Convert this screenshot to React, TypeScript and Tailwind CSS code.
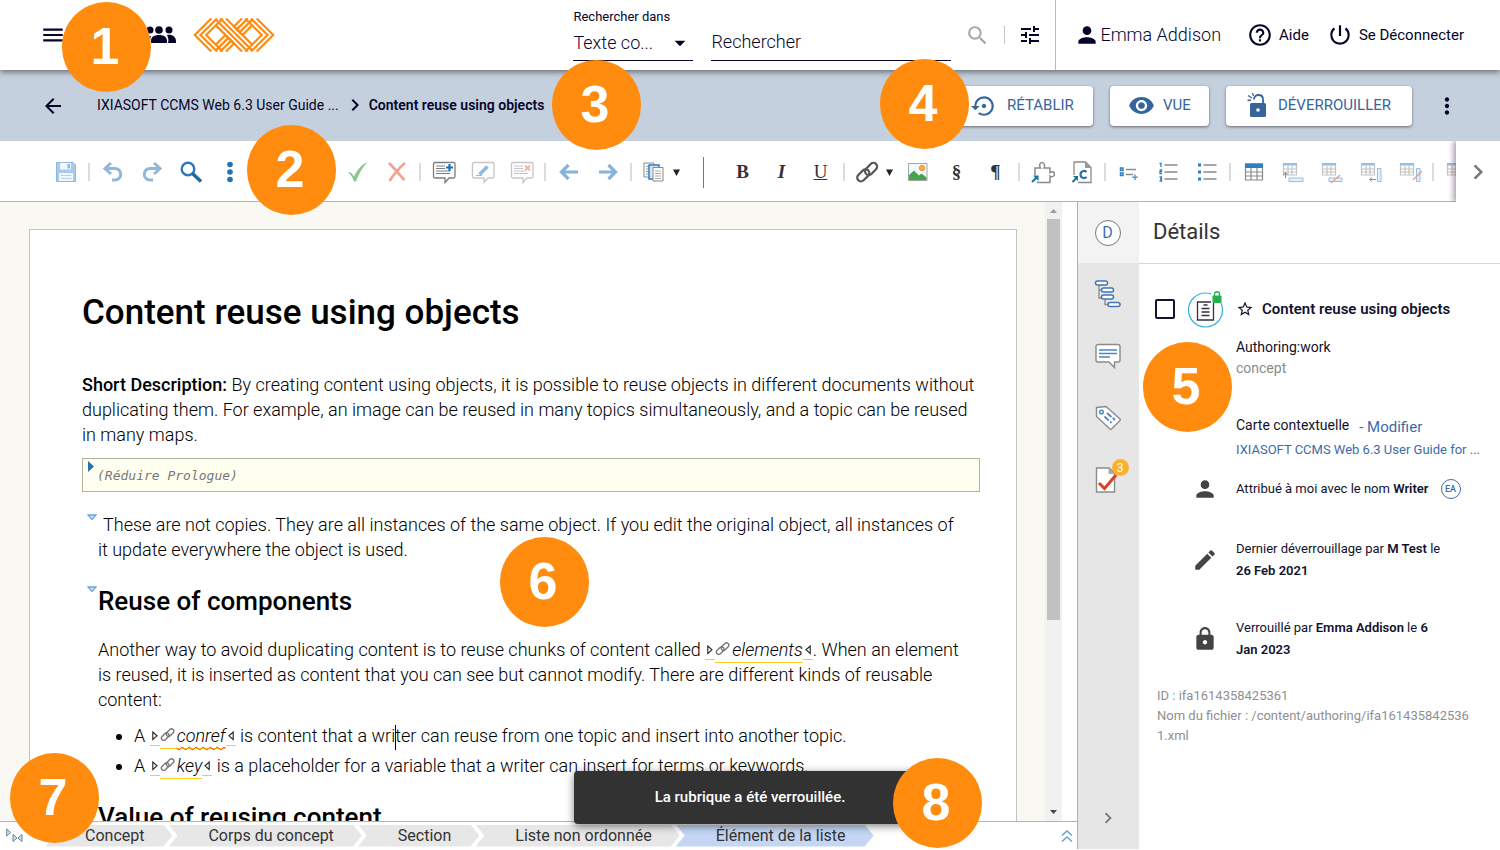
import type { ReactNode } from "react";
import {
  MdArrowBack,
  MdArrowDropDown,
  MdChevronRight,
  MdEdit,
  MdHelpOutline,
  MdLock,
  MdMenu,
  MdMoreVert,
  MdPerson,
  MdPowerSettingsNew,
  MdSearch,
  MdSettingsBackupRestore,
  MdStarBorder,
  MdTune,
  MdVisibility,
} from "react-icons/md";
import clsx from "clsx";

interface ClassNameProps {
  className?: string;
}

interface ChildrenProps extends ClassNameProps {
  children?: ReactNode;
}

/* ---------- Icons ---------- */

const Logo = () => (
  <svg width="82" height="34" viewBox="-1 0 82 33" fill="none" stroke="#ff8c0f" strokeWidth="2.2">
    {["", "rotate(180 40 16.5)"].map((transform) => (
      <g key={transform} transform={transform}>
        <path d="M17.3 0 .8 16.5l16.5 16.5M23 0 6.5 16.5 23 33M28.7 0 12.2 16.5 28.7 33" />
        <path d="M21.85 6.85 40 25M21.85 1.15 40 19.3M26.3 0 40 13.7M32 0l16.5 16.5" />
        <path d="M40 8l8-8M42.85 10.85 53.7 0M45.65 13.65l12.5-12.5M48.5 16.5l9.65-9.65" />
      </g>
    ))}
  </svg>
);

const GroupIcon = () => (
  <svg width="32" height="20" viewBox="0 0 32 20" fill="#05052a">
    <circle cx="6" cy="5" r="3.5" />
    <circle cx="15" cy="5" r="3.8" />
    <circle cx="25" cy="5" r="3.5" />
    <path d="M0 18c0-5 2-7 6-7h1c-1 2-1 4-1 7zM7 18v-2c0-4 3-6 8-6s8 2 8 6v2zM24 18c1-3 0-6-1-8 5-1 9 2 9 6v2z" />
  </svg>
);

const Icon = ({ children, className }: ChildrenProps) => (
  <svg width="24" height="24" viewBox="0 0 24 24" fill="none" className={className}>
    {children}
  </svg>
);

const SaveIcon = () => (
  <Icon>
    <path d="M2.5 2.5H19l2.5 2.5v16.5h-19z" fill="#a9cbe9" stroke="#8fb6dc" />
    <path d="M6 3h11v6.5H6z" fill="#f2f7fb" />
    <path d="M13.5 4H16v4.5h-2.500z" fill="#8fb6dc" />
    <path d="M5 13h14v8H5z" fill="#f2f7fb" />
    <path d="M7 15.5h10.500M7 18.5h10.500" stroke="#b9d1e6" />
  </Icon>
);

const UndoIcon = ({ className }: ClassNameProps) => (
  <Icon className={className}>
    <path d="M10 3 4 8.5l6 5.5M4.5 8.5H14A5.500 5.500 0 0 1 14 20h-3" stroke="#8fb8dd" strokeWidth="3" />
  </Icon>
);

const FindIcon = () => (
  <Icon>
    <circle cx="9" cy="9" r="6.3" stroke="#2b7ac0" strokeWidth="2.4" />
    <path d="m13.5 13.5 8.5 8" stroke="#1a6a9f" strokeWidth="3.6" />
  </Icon>
);

const BlueDotsIcon = () => (
  <Icon>
    <g fill="#2273b4">
      <circle cx="12" cy="4.5" r="2.8" />
      <circle cx="12" cy="12" r="2.8" />
      <circle cx="12" cy="19.5" r="2.8" />
    </g>
  </Icon>
);

const AcceptIcon = () => (
  <Icon>
    <path d="M2 12.5c2-1 4 0 6 4C11 10 15 5 21.500 2 16 8 12.5 14 10 21.500H8C6.5 17 4.5 14 2 12.500z" fill="#8cc48f" />
  </Icon>
);

const RejectIcon = () => (
  <Icon>
    <path d="M4 3c5 5 10 11 15.5 17M20 3C14 8 9 14 4.5 21" stroke="#f0a192" strokeWidth="2.6" />
  </Icon>
);

const CommentIcon = ({ children, className }: ChildrenProps) => (
  <Icon className={className}>
    <path
      d="M3 2.500h18.500A1.500 1.500 0 0 1 23 4v12.500a1.500 1.500 0 0 1-1.500 1.500H17l-4 4.500V18H3a1.500 1.500 0 0 1-1.500-1.500V4A1.500 1.500 0 0 1 3 2.500z"
      fill="#fff"
      stroke="currentColor"
      strokeWidth="1.3"
    />
    {children}
  </Icon>
);

const CommentLines = () => <path d="M4 6h9M4 8.5h9M4 11h14M4 13.5h14" stroke="currentColor" strokeWidth="1" />;

const ArrowIcon = ({ className }: ClassNameProps) => (
  <Icon className={className}>
    <path d="M4 12h17M11.5 5l-7 7 7 7" stroke="#84b3db" strokeWidth="3.2" />
  </Icon>
);

const CopiesIcon = () => (
  <Icon>
    <path d="M2 3h10v14H2z" fill="#fff" stroke="#8a8a8a" />
    <path d="M4 6.5h3M4 9h3M4 11.5h3M4 14h3" stroke="#999" />
    <path d="M7 5h10v14H7z" fill="#d5e7f7" stroke="#2f7fc4" strokeWidth="1.5" />
    <path d="M11 7.5h10V21H11z" fill="#fff" stroke="#8a8a8a" />
    <path d="M13 11h6M13 13.5h6M13 16h6M13 18.5h6" stroke="#aaa" />
  </Icon>
);

const LinkIcon = ({ size = 24, color = "#555" }: { size?: number; color?: string }) => (
  <svg width={size} height={size} viewBox="0 0 24 24" fill="none" className="inline-block align-baseline">
    <g transform="rotate(-45 12 12)" stroke={color} strokeWidth="2.2">
      <rect x="0" y="8" width="14" height="7.500" rx="3.7" />
      <rect x="10" y="9" width="14" height="7.500" rx="3.7" />
    </g>
  </svg>
);

const ImageIcon = () => (
  <Icon>
    <path d="M2.5 3.500h18.500v17H2.500z" fill="#f3f8fd" stroke="#a5a5a5" />
    <circle cx="16" cy="8" r="2.6" fill="#fbb03b" stroke="#f08a2c" />
    <path d="M3 20v-5l5-4.500 5 5 2.500-2 5 4V20z" fill="#4aa251" />
  </Icon>
);

const PuzzleIcon = () => (
  <Icon>
    <path
      d="M4 15V8h5.500c-1.500-2-1-5.500 1.500-5.500S14 6 13 8h6v4.500c2-1.500 4.500-.8 4.500 1.500S21 17.500 19 16v6.500H6"
      stroke="#8b8b8b"
      strokeWidth="1.5"
    />
    <path d="m1 22 5-5" stroke="#17719f" strokeWidth="2" />
    <path d="M2 15.500h5.500V21z" fill="#17719f" />
  </Icon>
);

const ReusableIcon = () => (
  <Icon>
    <path d="M4 15V2h11.500l5.500 5.500v15H8" stroke="#8b8b8b" strokeWidth="1.3" />
    <path d="M15 2v6h6z" fill="#9a9a9a" />
    <path d="M16.500 12c-2-2-6-1-6 2.500s4 4.500 6 2.500" stroke="#2273b4" strokeWidth="2.2" />
    <path d="m2.500 22 5-5" stroke="#17719f" strokeWidth="2" />
    <path d="M3 16h5v5z" fill="#17719f" />
  </Icon>
);

const InsertItemIcon = () => (
  <Icon>
    <path d="M3.500 8H6v2.500H3.500zM3.500 13H6v2.500H3.500z" stroke="#2b7fc2" strokeWidth="1.5" />
    <path d="M9 9.500h10M9 14.500h7" stroke="#8b8b8b" strokeWidth="1.3" />
    <path d="M18 14.500V20M15.300 17.300h5.500" stroke="#5a9bd0" strokeWidth="1.5" />
  </Icon>
);

const ListIcon = ({ ordered }: { ordered?: boolean }) => (
  <Icon>
    <path d="M8.500 5h13M8.500 12h13M8.500 19h13" stroke="#8b8b8b" strokeWidth="1.3" />
    {ordered ? (
      <path
        d="M3.500 3.500H5V7M3.500 10h2v1.700H4v2h2M3.500 17h2v4h-2M4 19h1.500"
        stroke="#2b7fc2"
        strokeWidth="1.3"
      />
    ) : (
      <path d="M3 3.500h3v3H3zM3 10.500h3v3H3zM3 17.500h3v3H3z" fill="#2b7fc2" />
    )}
  </Icon>
);

const TableIcon = () => (
  <Icon>
    <path d="M3.500 4h17v16h-17zM3.500 12h17M3.500 16h17M9 8v12M15 8v12" stroke="#8b8b8b" strokeWidth="1.2" />
    <path d="M3 3.500h18V8H3z" fill="#2b7fc2" />
  </Icon>
);

const TableEditIcon = ({ children }: ChildrenProps) => (
  <Icon>
    <path d="M2.500 4h13v11h-13zM2.500 9h13M2.500 12h13M7 6v9M11 6v9" stroke="#c3c3c3" strokeWidth="1.2" />
    <path d="M2 3h14v2.500H2z" fill="#90c0e6" />
    {children}
  </Icon>
);

const UnlockBurstIcon = () => (
  <svg width="22" height="26" viewBox="0 0 22 26" fill="none">
    <rect x="4" y="10" width="16" height="14" rx="1.5" fill="#36659d" />
    <path d="M8 6.500C8 3.500 10 2 12.500 2S17 3.500 17 6.500V11" stroke="#36659d" strokeWidth="1.8" />
    <circle cx="12" cy="17" r="1.8" fill="#fff" />
    <path d="M2 2.500 6 5M6.500 0l1 3M1.500 7.500l3.500-.5" stroke="#36659d" strokeWidth="1.3" />
  </svg>
);

const OutlineIcon = () => (
  <svg width="28" height="28" viewBox="0 0 28 28" fill="none">
    <path d="M5 5v13h5M5 10h3M11 19v5.500h4" stroke="#8b8b8b" strokeWidth="1.3" />
    <g fill="#fff" stroke="#4077b3" strokeWidth="1.5">
      <rect x="1.500" y="1" width="12" height="4" rx="2" />
      <rect x="7.500" y="8" width="12" height="4" rx="2" />
      <rect x="7.500" y="15" width="12" height="4" rx="2" />
      <rect x="14" y="22.500" width="12" height="4" rx="2" />
    </g>
  </svg>
);

const CommentsTabIcon = () => (
  <svg width="28" height="28" viewBox="0 0 28 28" fill="none">
    <path
      d="M4 2.500h20a2 2 0 0 1 2 2V18a2 2 0 0 1-2 2h-3.500v5.500L15 20H4a2 2 0 0 1-2-2V4.500a2 2 0 0 1 2-2z"
      fill="#fff"
      stroke="#8b8b8b"
      strokeWidth="1.4"
    />
    <path d="M5 8h18M5 11.500h18M5 15h11" stroke="#4b87c4" strokeWidth="1.5" />
  </svg>
);

const TagIcon = () => (
  <svg width="28" height="28" viewBox="0 0 28 28" fill="none">
    <path
      d="M2.500 3.500 12 2.500 26 15c.5.500.5 1 0 1.500L17.500 25c-.5.500-1 .5-1.500 0L2.500 12.500z"
      fill="#fff"
      stroke="#8b8b8b"
      strokeWidth="1.4"
    />
    <circle cx="7.500" cy="8" r="1.800" stroke="#4b87c4" strokeWidth="1.500" />
    <path d="m13 9 8 7M10.500 12.500l7 6.500" stroke="#4b87c4" strokeWidth="1.800" strokeDasharray="6 1.500" />
  </svg>
);

const ReviewIcon = () => (
  <svg width="28" height="28" viewBox="0 0 28 28" fill="none">
    <path d="M2.500 2H15l5.500 5v19h-18z" fill="#fff" stroke="#8b8b8b" strokeWidth="1.4" />
    <path d="M14.500 2v6h6z" fill="#aaa" />
    <path d="m5 17 5.500 5.500L22 9" stroke="#d8432a" strokeWidth="3" />
  </svg>
);

const DocumentLockIcon = () => (
  <svg width="36" height="38" viewBox="0 0 36 38" fill="none">
    <circle cx="17.500" cy="20" r="17" stroke="#33b1e2" strokeWidth="1.2" />
    <path d="M9.500 12h16v18h-16z" stroke="#33333f" strokeWidth="1.3" />
    <path d="M15.500 15h4M13.500 18.500h8M13.500 22h8M13.500 25.500h8" stroke="#33333f" strokeWidth="1.3" />
    <path d="M23 1h12v12H23z" fill="#fff" />
    <rect x="24.500" y="5.500" width="9" height="7.500" rx="1" fill="#22b14c" />
    <path d="M26.500 6V4c0-3 5-3 5 0v2" stroke="#22b14c" strokeWidth="1.3" />
  </svg>
);

/* ---------- Header ---------- */

const Header = () => (
  <header className="relative z-10 flex h-[70px] shrink-0 items-center bg-white pl-10 text-[#05052a] shadow-[0_2px_6px_rgba(0,0,0,0.5)]">
    <button type="button" aria-label="Menu">
      <MdMenu size={26} />
    </button>
    <button type="button" aria-label="Groupes" className="ml-[78px]">
      <GroupIcon />
    </button>
    <a href="#accueil" aria-label="Accueil" className="ml-[17px]">
      <Logo />
    </a>
    <form className="ml-auto flex h-full items-center">
      <div className="mr-[18px] flex h-[52px] w-[120px] flex-col border-b border-[#05052a]">
        <label htmlFor="scope" className="text-[13px] leading-4">
          Rechercher dans
        </label>
        <div className="relative flex grow items-center">
          <select id="scope" className="w-full appearance-none text-[18px] leading-6 font-light">
            <option>Texte co...</option>
          </select>
          <MdArrowDropDown size={26} className="pointer-events-none absolute right-0" />
        </div>
      </div>
      <div className="mr-[14px] flex h-[52px] w-60 items-end border-b border-[#05052a] pb-[6px]">
        <input
          type="text"
          aria-label="Rechercher"
          placeholder="Rechercher"
          className="w-full text-[18px] leading-6 font-light outline-none placeholder:text-[#05052a]"
        />
      </div>
      <button type="submit" aria-label="Lancer la recherche">
        <MdSearch size={25} className="text-[#a8a8a8]" />
      </button>
      <div className="ml-[14px] h-[18px] w-px bg-[#c4c4c4]" />
      <button type="button" aria-label="Filtres" className="mr-[13px] ml-[13px]">
        <MdTune size={24} />
      </button>
    </form>
    <div className="flex h-full items-center border-l border-[#b8b8b8] pr-9 pl-[18px] text-[15px]">
      <MdPerson size={26} />
      <span className="mr-[26px] text-[18px] leading-6 font-light">Emma Addison</span>
      <a href="#aide" className="mr-[18px] flex items-center gap-[6px]">
        <MdHelpOutline size={26} />
        Aide
      </a>
      <a href="#deconnexion" className="flex items-center gap-[6px]">
        <MdPowerSettingsNew size={26} />
        Se Déconnecter
      </a>
    </div>
  </header>
);

const ActionButton = ({ children, className }: ChildrenProps) => (
  <button
    type="button"
    className={clsx(
      "flex h-10 items-center rounded bg-white text-[15px] text-[#36659d] shadow-[0_1px_3px_rgba(0,0,0,0.5)]",
      className
    )}
  >
    {children}
  </button>
);

const TopicBar = () => (
  <div className="flex h-[71px] shrink-0 items-center bg-[#c5d0df] pl-[41px]">
    <button type="button" aria-label="Retour">
      <MdArrowBack size={24} />
    </button>
    <nav className="ml-8 flex items-center pb-px text-[14px]">
      <a href="#guide">IXIASOFT CCMS Web 6.3 User Guide ...</a>
      <MdChevronRight size={24} className="mr-[2px] ml-1" />
      <span className="font-semibold">Content reuse using objects</span>
    </nav>
    <div className="ml-auto flex gap-[17px]">
      <ActionButton className="w-[154px] gap-[10px] pl-8">
        <MdSettingsBackupRestore size={26} />
        RÉTABLIR
      </ActionButton>
      <ActionButton className="w-[99px] gap-2 pl-[18px]">
        <MdVisibility size={27} />
        VUE
      </ActionButton>
      <ActionButton className="w-[186px] gap-[10px] pl-[20px]">
        <UnlockBurstIcon />
        DÉVERROUILLER
      </ActionButton>
    </div>
    <button type="button" aria-label="Plus d'actions" className="mr-10 ml-[22px]">
      <MdMoreVert size={26} />
    </button>
  </div>
);

/* ---------- Editor toolbar ---------- */

const Tool = ({ label, children }: { label: string; children: ReactNode }) => (
  <button type="button" aria-label={label} className="flex h-10 w-[39px] shrink-0 items-center justify-center">
    {children}
  </button>
);

const MenuTool = ({ label, children }: { label: string; children: ReactNode }) => (
  <button type="button" aria-label={label} className="flex h-10 w-[50px] shrink-0 items-center gap-[6px] pl-[7px]">
    {children}
    <svg width="9" height="9" viewBox="0 0 9 9" fill="#222" className="shrink-0">
      <path d="M1 1.500h7L4.500 8z" />
    </svg>
  </button>
);

const Divider = () => <div className="mx-[3px] h-[18px] w-[2px] shrink-0 bg-[#dcdcdc]" />;

const letterClass = "font-['Liberation_Serif',serif] text-[19px] leading-6 text-[#333]";

const Toolbar = () => (
  <div className="flex h-[61px] shrink-0 bg-white">
    <div className="flex min-w-0 grow items-center overflow-hidden border-b border-[#b4b4b4] pt-[2px] pl-[46px]">
      <Tool label="Enregistrer"><SaveIcon /></Tool>
      <Divider />
      <Tool label="Annuler"><UndoIcon /></Tool>
      <Tool label="Rétablir"><UndoIcon className="-scale-x-100" /></Tool>
      <Tool label="Chercher"><FindIcon /></Tool>
      <Tool label="Plus"><BlueDotsIcon /></Tool>
      <div className="w-[89px] shrink-0" />
      <Tool label="Accepter"><AcceptIcon /></Tool>
      <Tool label="Refuser"><RejectIcon /></Tool>
      <Divider />
      <Tool label="Ajouter un commentaire">
        <CommentIcon className="text-[#7d7d7d]">
          <CommentLines />
          <path d="M13.500 3.500h8v6h-8z" fill="#fff" />
          <path d="M17.500 4v7M14 7.500h7" stroke="#1b6fb5" strokeWidth="2.2" />
        </CommentIcon>
      </Tool>
      <Tool label="Modifier le commentaire">
        <CommentIcon className="text-[#c6c6c6]">
          <path d="m8.500 14.500 8-8" stroke="#8dbbe2" strokeWidth="3.5" />
          <path d="M5 15.500h6" stroke="#8dbbe2" />
        </CommentIcon>
      </Tool>
      <Tool label="Supprimer le commentaire">
        <CommentIcon className="text-[#c6c6c6]">
          <CommentLines />
          <path d="M14 4.500h7v7h-7z" fill="#fff" />
          <path d="m15 5.500 5 5M20 5.500l-5 5" stroke="#f0a192" strokeWidth="1.6" />
        </CommentIcon>
      </Tool>
      <Divider />
      <Tool label="Précédent"><ArrowIcon /></Tool>
      <Tool label="Suivant"><ArrowIcon className="-scale-x-100" /></Tool>
      <Divider />
      <MenuTool label="Copier"><CopiesIcon /></MenuTool>
      <div className="mr-[19px] ml-[18px] h-[31px] w-px shrink-0 bg-[#777]" />
      <Tool label="Gras"><span className={clsx(letterClass, "font-bold")}>B</span></Tool>
      <Tool label="Italique"><span className={clsx(letterClass, "font-bold italic")}>I</span></Tool>
      <Tool label="Souligné"><span className={clsx(letterClass, "underline")}>U</span></Tool>
      <Divider />
      <MenuTool label="Lien"><LinkIcon /></MenuTool>
      <Tool label="Image"><ImageIcon /></Tool>
      <Tool label="Section"><span className={clsx(letterClass, "font-bold")}>§</span></Tool>
      <Tool label="Paragraphe"><span className={clsx(letterClass, "font-bold")}>¶</span></Tool>
      <Divider />
      <Tool label="Composant"><PuzzleIcon /></Tool>
      <Tool label="Contenu réutilisable"><ReusableIcon /></Tool>
      <Divider />
      <Tool label="Insérer un élément"><InsertItemIcon /></Tool>
      <Tool label="Liste ordonnée"><ListIcon ordered /></Tool>
      <Tool label="Liste non ordonnée"><ListIcon /></Tool>
      <Divider />
      <Tool label="Tableau"><TableIcon /></Tool>
      <Tool label="Insérer une ligne">
        <TableEditIcon>
          <path d="M8 18h14v3.500H8z" fill="#e4f0fa" stroke="#90c0e6" />
          <path d="M4.500 18v-5M2.500 15l2-2.500 2 2.500" stroke="#8b8b8b" />
        </TableEditIcon>
      </Tool>
      <Tool label="Supprimer une ligne">
        <TableEditIcon>
          <path d="M9 18h13v3.500H9z" fill="#e4f0fa" stroke="#90c0e6" />
          <path d="m11 23 9-8" stroke="#f0a192" strokeWidth="1.6" />
        </TableEditIcon>
      </Tool>
      <Tool label="Insérer une colonne">
        <TableEditIcon>
          <path d="M18.500 8.500H22v13h-3.500z" fill="#e4f0fa" stroke="#90c0e6" />
          <path d="M17 19.500h-6M13 17.500l-2.500 2 2.500 2" stroke="#8b8b8b" />
        </TableEditIcon>
      </Tool>
      <Tool label="Supprimer une colonne">
        <TableEditIcon>
          <path d="M18.500 8.500H22v13h-3.500z" fill="#e4f0fa" stroke="#90c0e6" />
          <path d="m15 20 9-9" stroke="#f0a192" strokeWidth="1.6" />
        </TableEditIcon>
      </Tool>
      <Divider />
      <Tool label="Cellules"><TableEditIcon /></Tool>
    </div>
    <button
      type="button"
      aria-label="Suite de la barre d'outils"
      className="z-1 flex w-11 shrink-0 items-center justify-center bg-white text-[#777] shadow-[-3px_0_5px_rgba(90,60,90,0.45)] [clip-path:inset(0_0_0_-8px)]"
    >
      <MdChevronRight size={30} />
    </button>
  </div>
);

/* ---------- Document ---------- */

const FoldMarker = () => (
  <svg width="10" height="7" viewBox="0 0 10 7" className="absolute top-[2px] -left-[11px]">
    <path d="M1 1h8L5 5.500z" fill="#cfe4f7" stroke="#6aa5dc" strokeWidth="1.3" />
  </svg>
);

const TagEdge = ({ flip }: { flip?: boolean }) => (
  <span className="inline-block h-[18px] border-b border-[#f8ce1c] px-[2px] align-middle">
    <svg width="6" height="10" viewBox="0 0 6 10" className={clsx("mt-[3px]", flip && "-scale-x-100")}>
      <path d="M.8 1v7.500L5 4.800z" fill="#fff" stroke="#222" strokeWidth="1.1" />
    </svg>
  </span>
);

const KeyPhrase = ({ children, misspelled }: ChildrenProps & { misspelled?: boolean }) => (
  <span className="whitespace-nowrap">
    <TagEdge />
    <span className="border-b border-[#f8ce1c] pb-[2px] italic">
      <LinkIcon size={15} color="#777" />
      <span
        className={clsx(
          "ml-[2px]",
          misspelled && "underline decoration-red-500 decoration-wavy decoration-1 underline-offset-4"
        )}
      >
        {children}
      </span>
    </span>
    <TagEdge flip />
  </span>
);

const Article = () => (
  <article className="mt-[27px] mr-7 ml-[29px] grow border border-b-0 border-[#c3c3c0] bg-white pr-9 pl-[52px] text-[18px] leading-[25px] font-light text-black">
    <h1 className="mt-[61px] text-[35px] leading-[44px] font-medium">Content reuse using objects</h1>
    <p className="mt-[37px]">
      <strong className="font-medium">Short Description:</strong> By creating content using objects, it is possible to
      reuse objects in different documents without
      <br />
      duplicating them. For example, an image can be reused in many topics simultaneously, and a topic can be reused
      <br />
      in many maps.
    </p>
    <div className="mt-[11px] flex h-[34px] items-start border border-[#b3b39b] bg-[#ffffef]">
      <svg width="6" height="11" viewBox="0 0 6 11" fill="#2472b5" className="mt-[2px] ml-[5px]">
        <path d="M0 0v11l6-5.500z" />
      </svg>
      <span className="mt-1 ml-[3px] font-['DejaVu_Sans_Mono',monospace] text-[13px] font-normal text-[#777] italic">
        (Réduire Prologue)
      </span>
    </div>
    <div className="ml-4">
      <p className="relative mt-5">
        <FoldMarker />
        <span className="pl-[5px]">
          These are not copies. They are all instances of the same object. If you edit the original object, all instances of
        </span>
        <br />
        it update everywhere the object is used.
      </p>
      <div className="relative mt-[22px]">
        <FoldMarker />
        <h2 className="text-[26px] leading-[34px] font-medium">Reuse of components</h2>
      </div>
      <p className="mt-[19px]">
        Another way to avoid duplicating content is to reuse chunks of content called <KeyPhrase>elements</KeyPhrase>. When
        an element
        <br />
        is reused, it is inserted as content that you can see but cannot modify. There are different kinds of reusable
        <br />
        content:
      </p>
      <ul className="mt-[11px] list-disc space-y-[3px] pl-[36px]">
        <li>
          A <KeyPhrase misspelled>conref</KeyPhrase> is content that a wri
          <span className="-mr-px inline-block h-[25px] w-px bg-black align-middle" />
          ter can reuse from one topic and insert into another topic.
        </li>
        <li>
          A <KeyPhrase>key</KeyPhrase> is a placeholder for a variable that a writer can insert for terms or keywords.
        </li>
      </ul>
      <h2 className="mt-[22px] text-[26px] leading-[34px] font-medium">Value of reusing content</h2>
    </div>
  </article>
);

const Scrollbar = () => (
  <div className="flex w-[17px] shrink-0 flex-col items-center bg-[#f1f1f1]" aria-hidden="true">
    <svg width="9" height="17" viewBox="0 0 9 17" fill="#999">
      <path d="M1 11h7L4.500 7z" />
    </svg>
    <div className="h-[401px] w-[13px] bg-[#c1c1c1]" />
    <svg width="9" height="17" viewBox="0 0 9 17" fill="#444" className="mt-auto">
      <path d="M1 6h7L4.500 10z" />
    </svg>
  </div>
);

const crumbs = ["Concept", "Corps du concept", "Section", "Liste non ordonnée", "Élément de la liste"];

const ElementPath = () => (
  <nav className="flex h-[28px] shrink-0 items-center border-t border-[#b4b4b4] pl-[6px] text-[#333]">
    <svg width="18" height="16" viewBox="0 0 18 16" fill="#cfe0ee" stroke="#65839c">
      <path d="M.7 1v7l4-3.500zM7 6.500v7l4-3.500zM16 6.500v7L12 10z" />
    </svg>
    <div className="ml-[25px] flex h-[22px] text-[16px] leading-[22px]">
      {crumbs.map((crumb, i) => (
        <a
          key={crumb}
          href="#element"
          className={clsx(
            "-ml-1 pr-7 pl-10 [clip-path:polygon(0_0,calc(100%_-_9px)_0,100%_50%,calc(100%_-_9px)_100%,0_100%,9px_50%)]",
            i === crumbs.length - 1 ? "bg-[#c4d6f3]" : "bg-[#e7e7e7]"
          )}
        >
          {crumb}
        </a>
      ))}
    </div>
    <button type="button" aria-label="Déplier" className="mr-1 ml-auto">
      <svg width="12" height="14" viewBox="0 0 12 14" fill="none" stroke="#6aa0d0" strokeWidth="1.5">
        <path d="m1 6.500 5-4.500 5 4.500M1 12.500 6 8l5 4.500" />
      </svg>
    </button>
  </nav>
);

/* ---------- Side panel ---------- */

const RailTab = ({ label, children, active }: { label: string; children: ReactNode; active?: boolean }) => (
  <button
    type="button"
    aria-label={label}
    className={clsx("flex items-center justify-center pr-[2px]", active ? "h-[61px] bg-[#f3f3f3]" : "h-[62px]")}
  >
    {children}
  </button>
);

const Rail = () => (
  <div className="flex w-[62px] shrink-0 flex-col border-l border-[#b0b0b0] bg-[#e6e6e6]">
    <RailTab label="Détails" active>
      <span className="flex size-[26px] items-center justify-center rounded-full border border-[#777] bg-white text-[16px] text-[#3a72b0]">
        D
      </span>
    </RailTab>
    <RailTab label="Structure"><OutlineIcon /></RailTab>
    <RailTab label="Commentaires"><CommentsTabIcon /></RailTab>
    <RailTab label="Étiquettes"><TagIcon /></RailTab>
    <RailTab label="Révisions">
      <span className="relative">
        <ReviewIcon />
        <span className="absolute -top-[7px] -right-[7px] flex size-[17px] items-center justify-center rounded-full bg-[#fdb02f] text-[12px] text-white">
          3
        </span>
      </span>
    </RailTab>
    <button
      type="button"
      aria-label="Réduire le panneau"
      className="mt-auto flex h-[62px] items-center justify-center pr-[2px] text-[#777]"
    >
      <MdChevronRight size={22} />
    </button>
  </div>
);

const InfoRow = ({ icon, children }: { icon: ReactNode; children: ReactNode }) => (
  <div className="flex items-center gap-[18px] pl-[53px] text-[13px] leading-[22px]">
    <span className="shrink-0 text-[#444]">{icon}</span>
    <p className="w-[216px] grow">{children}</p>
  </div>
);

const DetailsPanel = () => (
  <aside className="w-[361px] shrink-0 bg-white text-[#12122e]">
    <h2 className="h-[62px] border-b border-[#d6d6d6] pl-[14px] text-[22px] leading-[60px] text-[#333]">Détails</h2>
    <div className="mt-[26px] flex h-[38px] items-center pl-4">
      <input
        type="checkbox"
        aria-label="Sélectionner la rubrique"
        className="size-[20px] appearance-none rounded-[2px] border-2 border-[#12122e]"
      />
      <span className="ml-[13px]">
        <DocumentLockIcon />
      </span>
      <MdStarBorder size={18} className="ml-3" />
      <strong className="ml-2 text-[15px] font-semibold">Content reuse using objects</strong>
    </div>
    <div className="mt-[9px] pl-[97px] text-[14px] leading-[21px]">
      <p>Authoring:work</p>
      <p className="text-[#8a8a8a]">concept</p>
      <p className="mt-9 flex gap-[10px]">
        Carte contextuelle
        <a href="#modifier" className="text-[15px] leading-6 text-[#3c6ca5]">
          - Modifier
        </a>
      </p>
      <a href="#carte" className="block text-[13px] leading-[22px] text-[#3c6ca5]">
        IXIASOFT CCMS Web 6.3 User Guide for ...
      </a>
    </div>
    <div className="mt-[15px]">
      <InfoRow icon={<MdPerson size={26} />}>
        <span className="flex items-center">
          Attribué à moi avec le nom&nbsp;<b className="font-semibold">Writer</b>
          <span className="ml-3 flex size-5 items-center justify-center rounded-full border border-[#3c6ca5] text-[9px] font-medium text-[#3c6ca5]">
            EA
          </span>
        </span>
      </InfoRow>
    </div>
    <div className="mt-9">
      <InfoRow icon={<MdEdit size={26} />}>
        Dernier déverrouillage par <b className="font-semibold">M Test</b> le
        <br />
        <b className="font-semibold">26 Feb 2021</b>
      </InfoRow>
    </div>
    <div className="mt-[35px]">
      <InfoRow icon={<MdLock size={26} />}>
        Verrouillé par <b className="font-semibold">Emma Addison</b> le <b className="font-semibold">6</b>
        <br />
        <b className="font-semibold">Jan 2023</b>
      </InfoRow>
    </div>
    <p className="mt-[25px] pr-6 pl-[18px] text-[13px] leading-5 break-all text-[#8f8f8f]">
      ID : ifa1614358425361
      <br />
      Nom du fichier : /content/authoring/ifa1614358425361.xml
    </p>
  </aside>
);

/* ---------- Overlays ---------- */

const callouts = [
  "left-[62px] top-[2px]",
  "left-[247px] top-[125px]",
  "left-[552px] top-[60px]",
  "left-[880px] top-[59px]",
  "left-[1143px] top-[342px]",
  "left-[500px] top-[537px]",
  "left-[10px] top-[753px]",
  "left-[893px] top-[758px]",
];

const Callouts = () => (
  <>
    {callouts.map((position, i) => (
      <div
        key={position}
        className={clsx(
          "absolute z-30 flex h-[90px] w-[89px] items-center justify-center rounded-full bg-[#ff8c0f] pr-[3px] pb-[2px] font-['Liberation_Sans',sans-serif] text-[52px] leading-none font-bold text-white",
          position
        )}
      >
        {i + 1}
      </div>
    ))}
  </>
);

const Toast = () => (
  <div
    role="status"
    className="absolute bottom-[26px] left-[574px] z-20 flex h-[53px] w-[352px] items-center justify-center rounded bg-[#323232] text-[15px] font-medium text-white shadow-[0_2px_8px_rgba(0,0,0,0.5)]"
  >
    La rubrique a été verrouillée.
  </div>
);

export default function App() {
  return (
    <div className="relative flex h-screen flex-col overflow-hidden bg-white font-[Roboto,sans-serif] text-[#05052a]">
      <Header />
      <TopicBar />
      <Toolbar />
      <div className="flex min-h-0 grow pb-px">
        <main className="flex min-w-0 grow flex-col">
          <div className="mr-[15px] flex min-h-0 grow overflow-hidden bg-[#faf8f3]">
            <Article />
            <Scrollbar />
          </div>
          <ElementPath />
        </main>
        <Rail />
        <DetailsPanel />
      </div>
      <Toast />
      <Callouts />
    </div>
  );
}
